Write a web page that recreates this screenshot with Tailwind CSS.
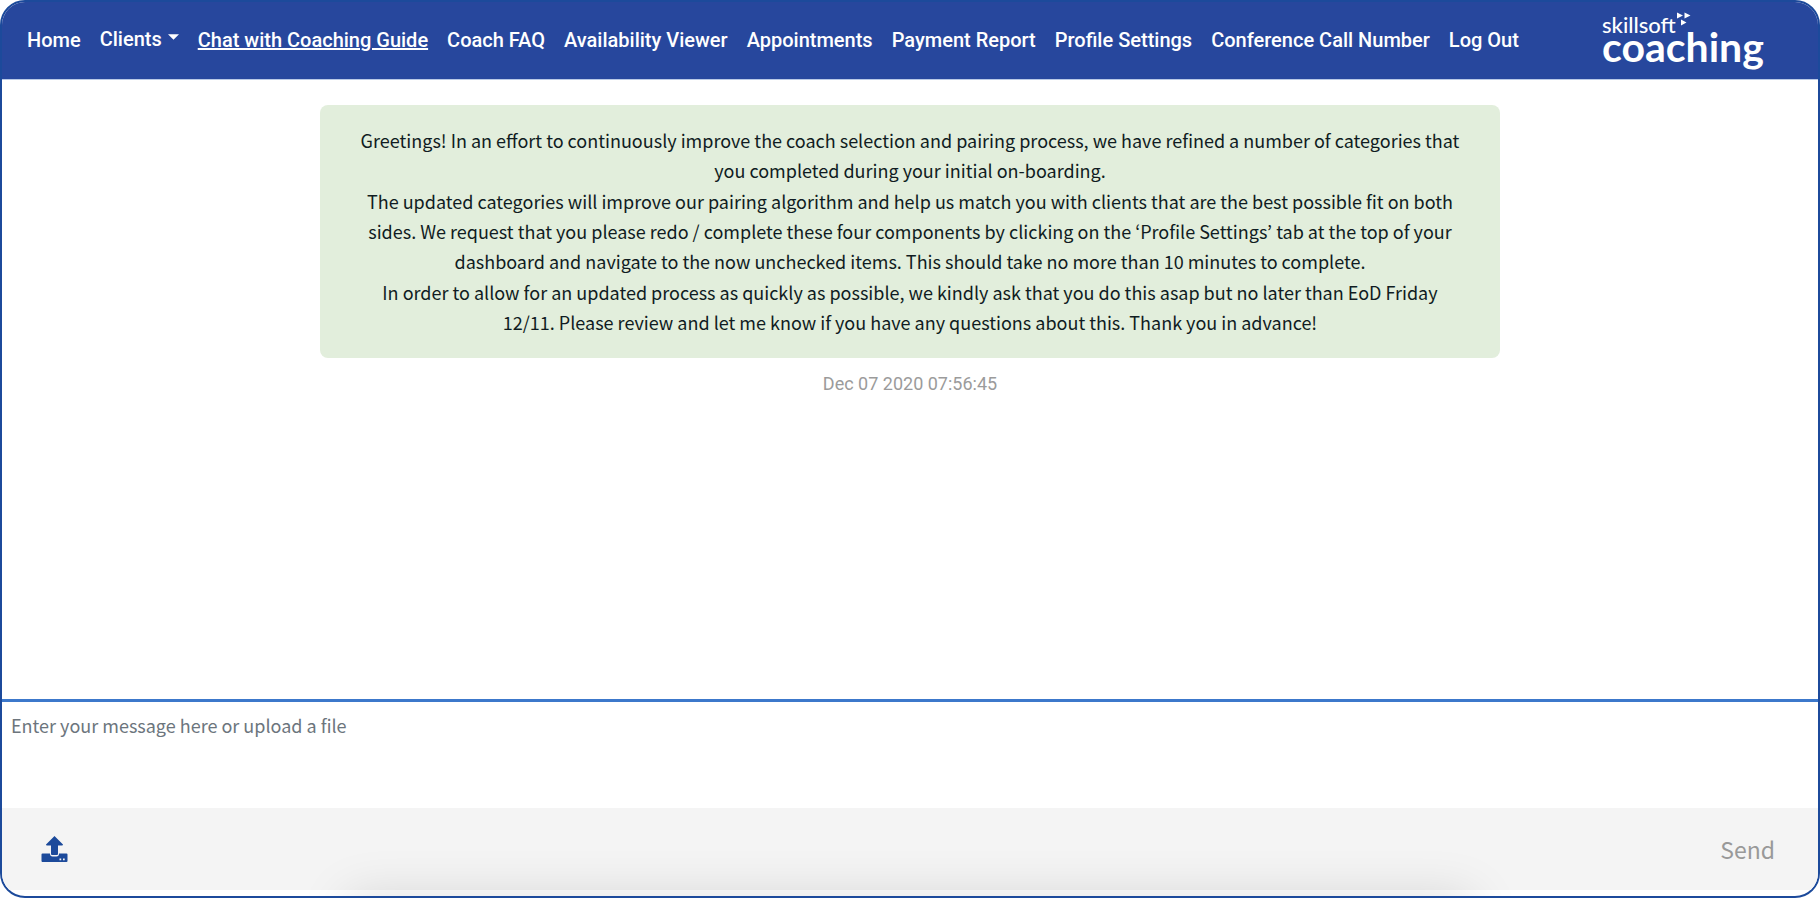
<!DOCTYPE html>
<html lang="en">
<head>
<meta charset="utf-8">
<meta name="viewport" content="width=device-width, initial-scale=1">
<title>Chat with Coaching Guide</title>
<script src="https://cdn.jsdelivr.net/npm/@tailwindcss/browser@4"></script>
</head>
<body class="bg-white">
<div class="relative flex min-h-screen flex-col overflow-hidden rounded-[25px] border-2 border-[#1c4a9b] bg-white font-['Noto_Sans_CJK_KR',sans-serif]">
  <header class="flex h-[77px] shrink-0 items-center justify-between bg-[#27479d] pl-[25px] pr-[52px] text-white">
    <nav class="flex items-center gap-[19px] whitespace-nowrap pb-[2px] font-[Roboto,sans-serif] text-[20px] font-medium leading-[30px]">
      <a href="#">Home</a>
      <button type="button" class="flex items-center gap-[6px] pb-[2px]">Clients
        <svg class="mb-1 h-[6px] w-[11px]" viewBox="0 0 12 6" fill="currentColor" aria-hidden="true"><path d="M0 0h12L6 6z"/></svg>
      </button>
      <a href="#" class="underline" aria-current="page">Chat with Coaching Guide</a>
      <a href="#">Coach FAQ</a>
      <a href="#">Availability Viewer</a>
      <a href="#">Appointments</a>
      <a href="#">Payment Report</a>
      <a href="#">Profile Settings</a>
      <a href="#">Conference Call Number</a>
      <a href="#">Log Out</a>
    </nav>
    <svg class="h-[64px] w-[166px] shrink-0 overflow-visible" viewBox="0 0 166 64" fill="#fff" role="img" aria-label="skillsoft coaching">
      <text x="2" y="24" font-family="Lato, sans-serif" font-size="22" font-weight="500">skillsoft</text>
      <text x="2" y="53" font-family="Lato, sans-serif" font-size="41" font-weight="700">coaching</text>
      <path d="M77 3.500l6 3-6 3zM84.500 3.500l6 3-6 3zM81 10.500l5.500 3-5.500 3z"/>
    </svg>
  </header>
  <main class="flex flex-1 flex-col items-center border-t border-[#b9c9e6] pt-[25px]">
    <article class="flex w-[65%] flex-col gap-px rounded-lg bg-[#e2eedc] px-9 pb-[21px] pt-5 text-center text-[18px] leading-[30px] text-[#101c22]">
      <p>Greetings! In an effort to continuously improve the coach selection and pairing process, we have refined a number of categories that you completed during your initial on-boarding.</p>
      <p>The updated categories will improve our pairing algorithm and help us match you with clients that are the best possible fit on both sides. We request that you please redo / complete these four components by clicking on the ‘Profile Settings’ tab at the top of your dashboard and navigate to the now unchecked items. This should take no more than 10 minutes to complete.</p>
      <p>In order to allow for an updated process as quickly as possible, we kindly ask that you do this asap but no later than EoD Friday 12/11. Please review and let me know if you have any questions about this. Thank you in advance!</p>
    </article>
    <time datetime="2020-12-07T07:56:45" class="mt-3 font-[Roboto,sans-serif] text-[18px] leading-[28px] text-[#9b9b9b]">Dec 07 2020 07:56:45</time>
  </main>
  <form class="shrink-0 pb-[6px]">
    <textarea aria-label="Message" placeholder="Enter your message here or upload a file" class="block h-[109px] w-full resize-none border-t-3 border-[#3c78cb] px-[9px] py-2 text-[18px] leading-[30px] outline-none placeholder:text-[#6c757d]"></textarea>
    <div class="flex h-[82px] items-center justify-between bg-[#f4f4f4] pl-[39px] pr-[43px]">
      <button type="button" aria-label="Upload a file" class="text-[#1c4a9b]">
        <svg class="h-[26px] w-[27px]" viewBox="0 0 27 26" fill="currentColor" aria-hidden="true">
          <path d="M13.500 0L22 8.500Q22 9.500 21 9.500H17V18Q17 19 16 19H11Q10 19 10 18V9.500H6Q5 9.500 5 8.500Z"/>
          <path fill-rule="evenodd" d="M1.500 17.500H9Q9 20.500 11.500 20.500H15.500Q18 20.500 18 17.500H25.500Q26.500 17.500 26.500 18.500V25Q26.500 26 25.500 26H1.500Q.5 26 .5 25V18.500Q.5 17.500 1.500 17.500ZM18.500 22.500V24.200H20.200V22.500ZM22 22.500V24.200H23.700V22.500Z"/>
        </svg>
      </button>
      <button type="submit" class="text-[23px] leading-[36px] text-[#999]">Send</button>
    </div>
  </form>
  <!-- shadow rising from below the window -->
  <div class="pointer-events-none absolute inset-x-[345px] top-full h-20 shadow-[0_0_50px_rgba(0,0,0,0.13)]"></div>
</div>
</body>
</html>
